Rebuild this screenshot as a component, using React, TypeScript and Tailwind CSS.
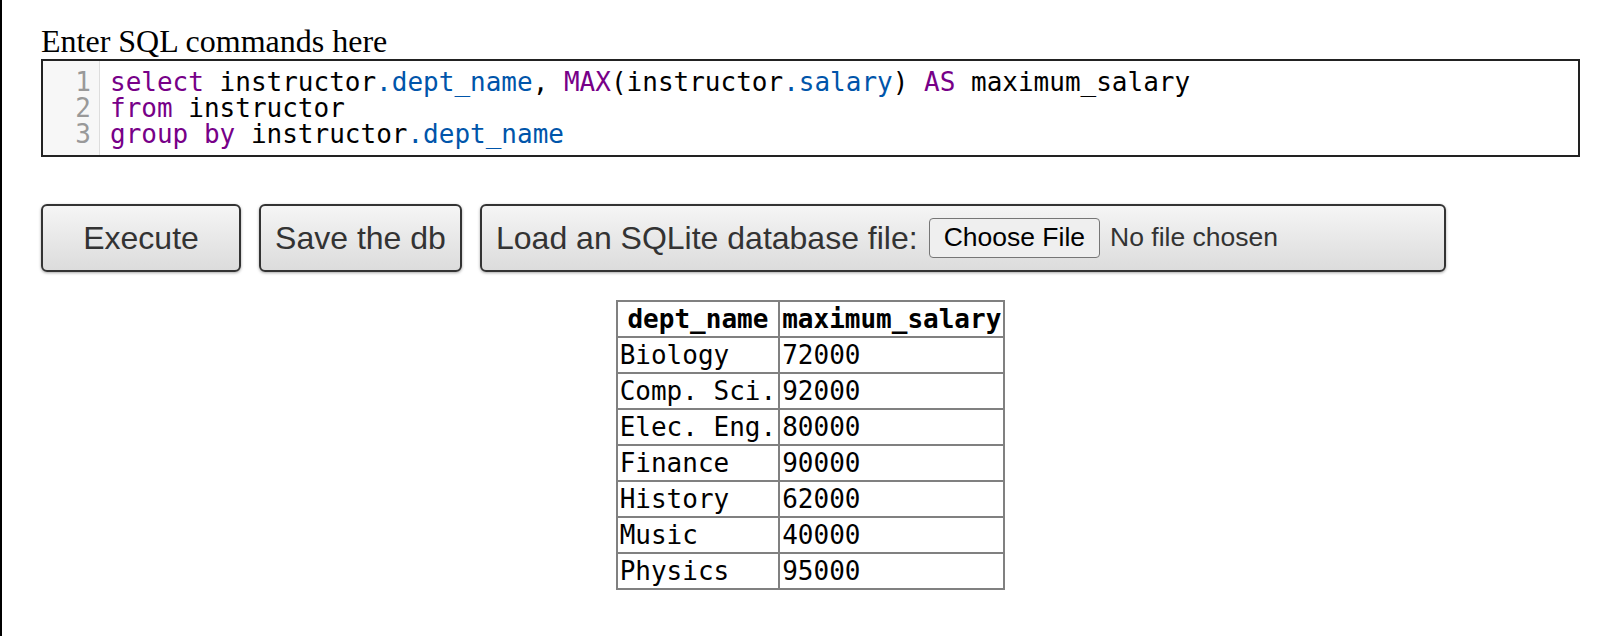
import React from 'react';

const rows: [string, string][] = [
  ['Biology', '72000'],
  ['Comp. Sci.', '92000'],
  ['Elec. Eng.', '80000'],
  ['Finance', '90000'],
  ['History', '62000'],
  ['Music', '40000'],
  ['Physics', '95000'],
];

const mono = "font-['DejaVu_Sans_Mono','Liberation_Mono',monospace]";

const App: React.FC = () => {
  return (
    <div className="min-h-screen bg-white border-l-2 border-black pl-[39px] pr-[36px] pt-[24px]">
      {/* Label */}
      <div className="font-['Liberation_Serif','Times_New_Roman',serif] text-[32px] text-black leading-[35px]">
        Enter SQL commands here
      </div>

      {/* Editor */}
      <div className={`flex border-2 border-[#222] ${mono} text-[26px] leading-[26px]`}>
        <div className="w-[57px] shrink-0 bg-[#f7f7f7] border-r border-[#ddd] py-[8px] pr-[8px] text-right text-[#999]">
          <div>1</div>
          <div>2</div>
          <div>3</div>
        </div>
        <div className="pl-[10px] py-[8px] text-black whitespace-pre">
          <div>
            <span className="text-[#708]">select</span> instructor<span className="text-[#05a]">.dept_name</span>,{' '}
            <span className="text-[#708]">MAX</span>(instructor<span className="text-[#05a]">.salary</span>){' '}
            <span className="text-[#708]">AS</span> maximum_salary
          </div>
          <div>
            <span className="text-[#708]">from</span> instructor
          </div>
          <div>
            <span className="text-[#708]">group</span> <span className="text-[#708]">by</span> instructor
            <span className="text-[#05a]">.dept_name</span>
          </div>
        </div>
      </div>

      {/* Buttons */}
      <div className="mt-[47px] flex gap-[18px] h-[68px] font-['Liberation_Sans',Arial,sans-serif] text-[32px] text-[#333]">
        <button className="w-[200px] rounded-[6px] border-2 border-[#333] bg-gradient-to-b from-[#f5f5f5] to-[#dcdcdc] shadow-[0_1px_3px_rgba(0,0,0,0.35)]">
          Execute
        </button>
        <button className="w-[203px] rounded-[6px] border-2 border-[#333] bg-gradient-to-b from-[#f5f5f5] to-[#dcdcdc] shadow-[0_1px_3px_rgba(0,0,0,0.35)]">
          Save the db
        </button>
        <div className="w-[966px] flex items-center pl-[14px] rounded-[6px] border-2 border-[#333] bg-gradient-to-b from-[#f5f5f5] to-[#dcdcdc] shadow-[0_1px_3px_rgba(0,0,0,0.35)]">
          <span>Load an SQLite database file:</span>
          <span className="ml-[11px] h-[40px] px-[14px] flex items-center rounded-[4px] border border-[#767676] bg-[#efefef] text-[26.5px] text-black">
            Choose File
          </span>
          <span className="ml-[10px] text-[26.5px] text-[#333]">No file chosen</span>
        </div>
      </div>

      {/* Results */}
      <table className={`mt-[28px] mx-auto border-collapse ${mono} text-[26px] leading-[30px] text-black`}>
        <thead>
          <tr>
            <th className="border-2 border-[#808080] px-[2px] py-[2px] font-bold text-center">dept_name</th>
            <th className="border-2 border-[#808080] px-[2px] py-[2px] font-bold text-center">maximum_salary</th>
          </tr>
        </thead>
        <tbody>
          {rows.map(([dept, salary]) => (
            <tr key={dept}>
              <td className="border-2 border-[#808080] px-[2px] py-[2px] whitespace-pre">{dept}</td>
              <td className="border-2 border-[#808080] px-[2px] py-[2px]">{salary}</td>
            </tr>
          ))}
        </tbody>
      </table>
    </div>
  );
};

export default App;
